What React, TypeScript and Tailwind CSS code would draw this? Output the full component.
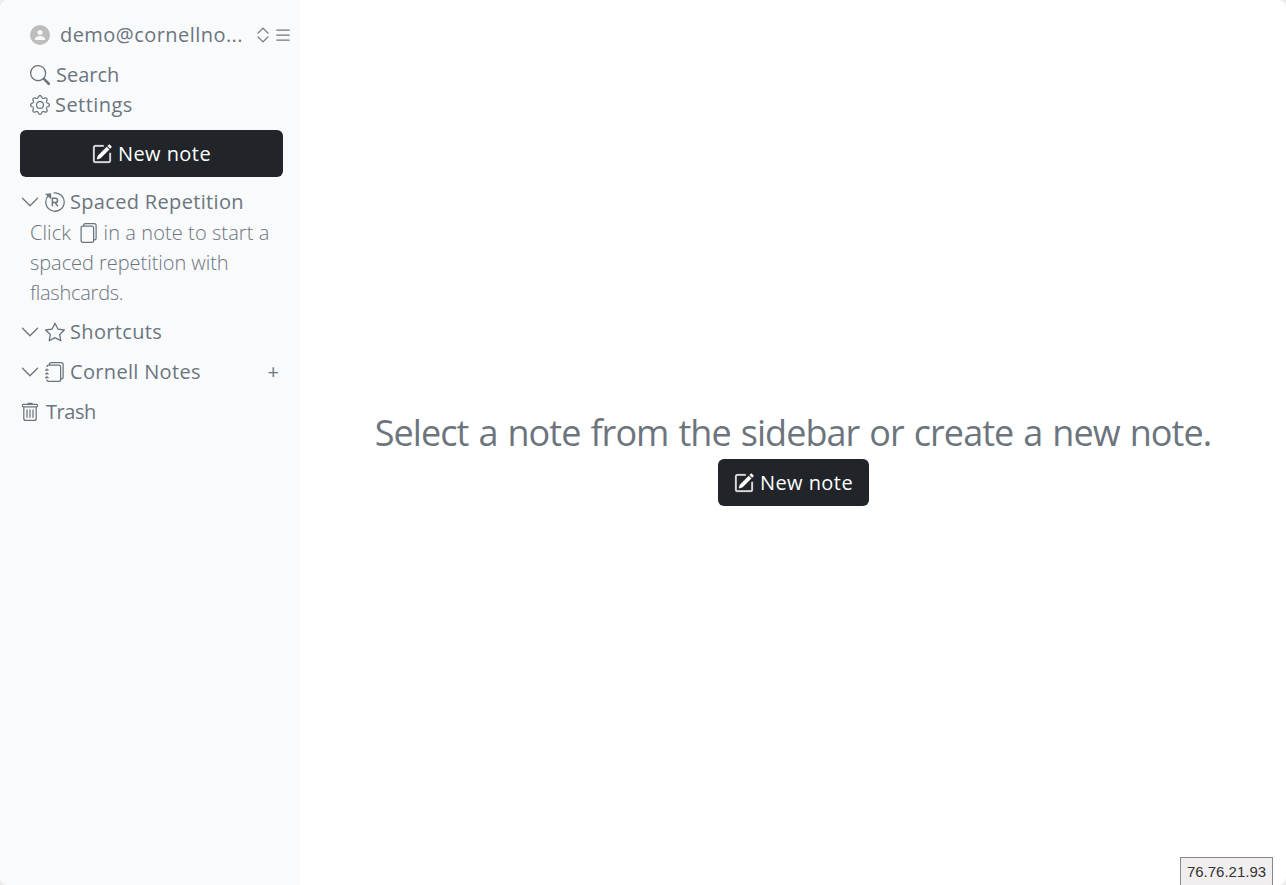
import type { ReactNode } from 'react';
import {
  BsChevronDown,
  BsChevronExpand,
  BsFiles,
  BsGear,
  BsJournals,
  BsList,
  BsPencilSquare,
  BsSearch,
  BsStar,
} from 'react-icons/bs';

function UserAvatar() {
  return (
    <svg width="20" height="20" viewBox="0 0 20 20" className="shrink-0">
      <circle cx="10" cy="10" r="10" fill="#bdbdbd" />
      <circle cx="10" cy="7.4" r="2.5" fill="#f8fafc" />
      <path d="M5 15v-1.2c0-1.9 3.3-2.8 5-2.8s5 .9 5 2.8V15z" fill="#f8fafc" />
    </svg>
  );
}

function RepetitionIcon() {
  return (
    <svg width="20" height="20" viewBox="0 0 20 20" fill="none" stroke="currentColor" strokeWidth="1.25" className="shrink-0">
      <path d="M8.6.9A9.2 9.2 0 1 1 3.4 3.6" />
      <path d="M1.4 2.4l4-.4.2 3.8z" fill="currentColor" />
      <path d="M7.4 14.2V6.2h2.9a2.2 2.2 0 0 1 0 4.4H7.4M10.2 10.6l2.6 3.6" strokeWidth="1.5" />
    </svg>
  );
}

function TrashIcon() {
  return (
    <svg width="20" height="20" viewBox="0 0 20 20" fill="none" stroke="currentColor" strokeWidth="1.25" className="shrink-0">
      <path d="M7.5 1.5h5" strokeWidth="1.5" />
      <rect x="2.4" y="2.4" width="15.2" height="2.4" rx="1" />
      <path d="M3.8 5v11.4a2 2 0 0 0 2 2h8.4a2 2 0 0 0 2-2V5" />
      <path d="M7 7.5v8.2M10 7.5v8.2M13 7.5v8.2" />
    </svg>
  );
}

function NewNoteButton({ className = '' }: { className?: string }) {
  return (
    <button
      type="button"
      className={`flex h-[47px] items-center justify-center gap-1.5 rounded-md bg-[#212529] tracking-[0.45px] text-white ${className}`}
    >
      <BsPencilSquare size={20} strokeWidth={0.3} />
      <span>New note</span>
    </button>
  );
}

function SectionHeader({ icon, title, children }: { icon: ReactNode; title: string; children?: ReactNode }) {
  return (
    <div className="flex h-[30px] items-center pl-5 pr-[21px]">
      <BsChevronDown size={20} className="mr-[5px] shrink-0" />
      {icon}
      <span className="ml-[5px] flex-1 tracking-[0.33px]">{title}</span>
      {children}
    </div>
  );
}

export default function App() {
  return (
    <div className="h-[885px] w-[1286px] bg-[#ececec]">
      <div className="flex h-full overflow-hidden rounded-lg bg-white font-['Open_Sans','Noto_Sans',sans-serif] text-xl leading-[30px] whitespace-nowrap text-[#6c757d]">
        <aside className="flex w-[300px] shrink-0 flex-col bg-[#f8fafc] pt-5">
          <div className="flex h-[30px] items-center pl-[30px]">
            <UserAvatar />
            <span className="ml-2.5 w-[192.5px] tracking-[0.45px]">demo@cornellno...</span>
            <BsChevronExpand size={20} className="shrink-0" />
            <BsList size={20} className="shrink-0" />
          </div>

          <nav className="mt-2.5 flex flex-col pl-[30px]">
            <a className="flex items-center gap-1.5">
              <BsSearch size={20} />
              <span>Search</span>
            </a>
            <a className="flex items-center gap-[5px]">
              <BsGear size={20} />
              <span className="tracking-[0.45px]">Settings</span>
            </a>
          </nav>

          <NewNoteButton className="mt-2.5 ml-5 w-[263px]" />

          <div className="mt-2.5 flex flex-col gap-2.5">
            <div className="h-[120px]">
              <SectionHeader icon={<RepetitionIcon />} title="Spaced Repetition" />
              <p className="mt-px pl-[30px] font-light tracking-[-0.05px]">
                <span className="tracking-[0.08px]">
                  Click <BsFiles size={20} className="ml-0.5 inline align-[-3px]" /> in a note to start a
                </span>
                <br />
                spaced repetition with
                <br />
                <span className="tracking-[-0.25px]">flashcards.</span>
              </p>
            </div>
            <SectionHeader icon={<BsStar size={20} />} title="Shortcuts" />
            <SectionHeader icon={<BsJournals size={20} />} title="Cornell Notes">
              <span>+</span>
            </SectionHeader>
            <div className="flex h-[30px] items-center gap-1.5 pl-5">
              <TrashIcon />
              <span className="tracking-[-0.45px]">Trash</span>
            </div>
          </div>
        </aside>

        <main className="flex flex-1 flex-col items-center pt-[411px]">
          <h1 className="h-12 text-4xl leading-[44px] tracking-[-0.93px] [word-spacing:1.5px]">
            Select a note from the sidebar or create a new note.
          </h1>
          <NewNoteButton className="w-[151px] pl-px" />
        </main>

        <div className="absolute top-[857px] left-[1180px] h-7 w-[93px] border border-b-0 border-[#888] bg-[#f0eeee] text-center font-['Liberation_Sans',sans-serif] text-[15px] leading-7 text-[#333]">
          76.76.21.93
        </div>
      </div>
    </div>
  );
}
